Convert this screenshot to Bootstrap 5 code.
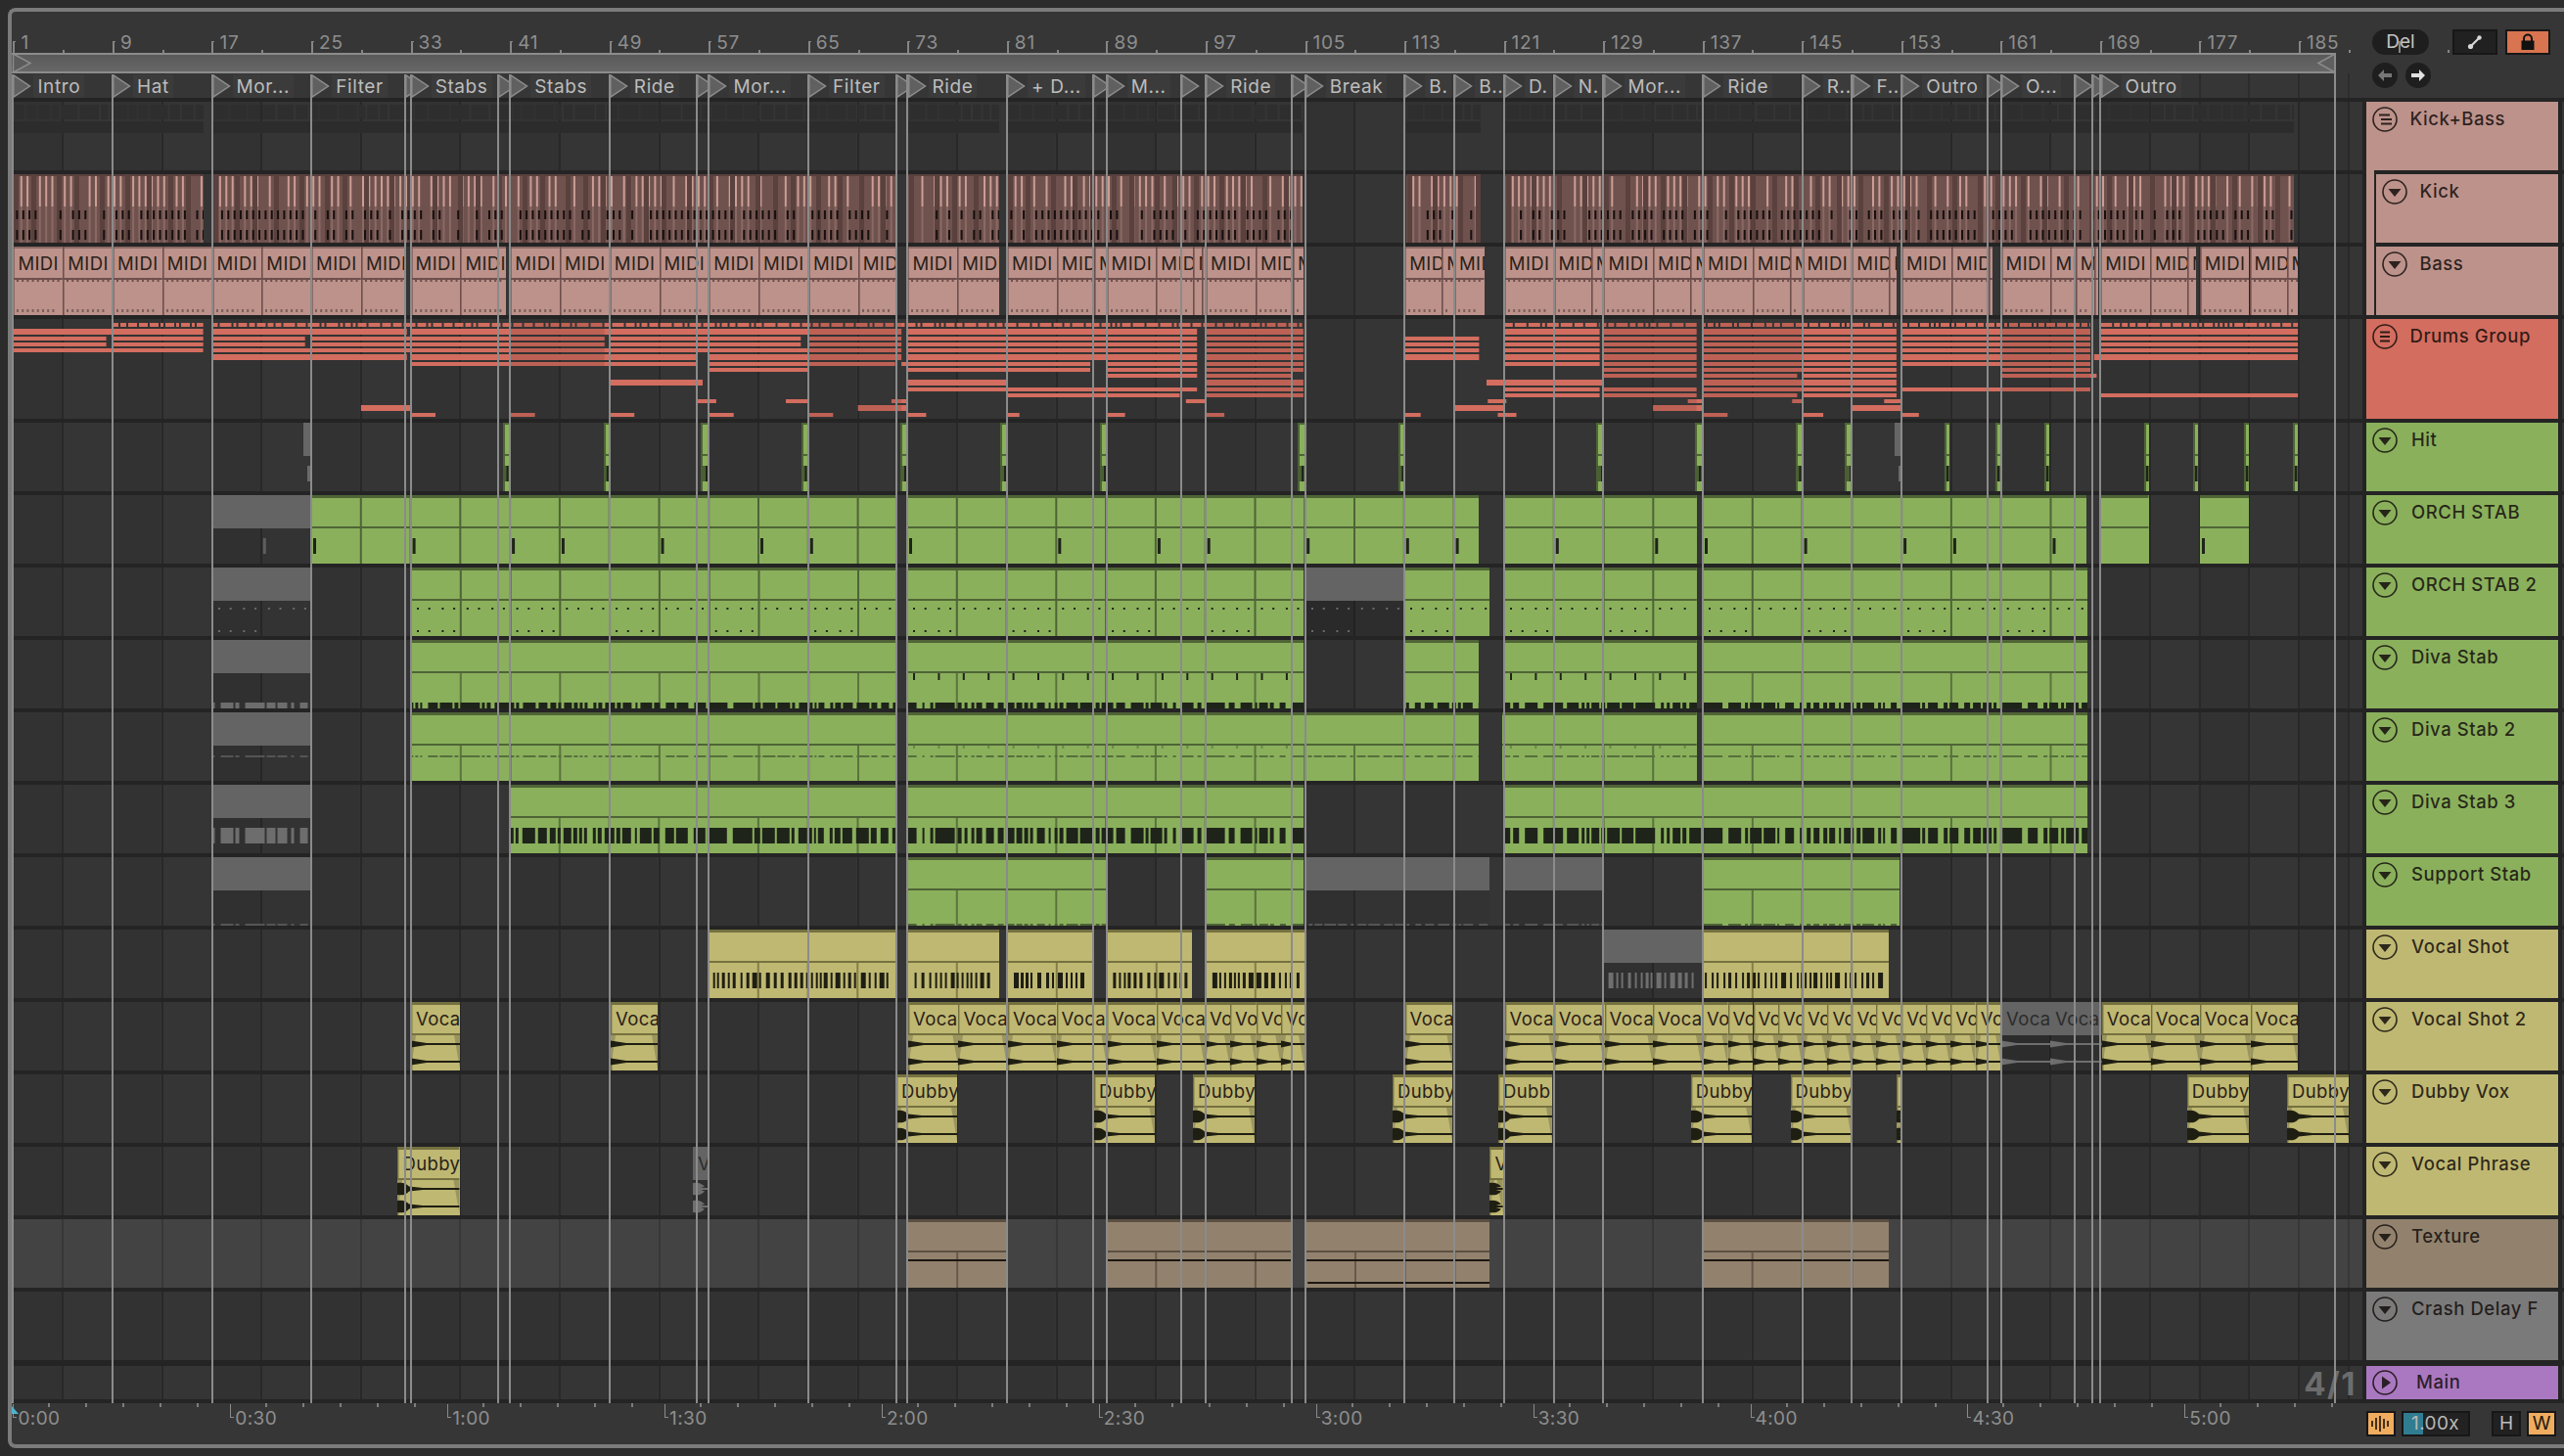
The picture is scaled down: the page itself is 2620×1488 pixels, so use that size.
<!DOCTYPE html>
<html lang="en">
<head>
<meta charset="utf-8">
<title>Arrangement</title>
<link rel="stylesheet" href="https://cdn.jsdelivr.net/npm/bootstrap@5.3.0/dist/css/bootstrap.min.css">
<style>
:root{--grid:#282828;--trk:#333333;--sep:#242424;}
html,body{margin:0;background:#2b2b2b;}
body{width:2620px;height:1488px;overflow:hidden;padding:8px 0 8px 8px;font-family:Inter,"Liberation Sans",sans-serif;}
.frame{height:1472px;border:4px solid #7b7b7b;border-right:0;border-radius:8px 0 0 8px;background:#363636;position:relative;overflow:hidden;}
.hdr{height:88px;flex:none;}
.hdr-l{width:2406px;flex:none;}
.ruler{height:42px;padding-left:1.4px;}
.rcell{width:101.56px;flex:none;position:relative;padding-left:8px;color:#8e8e8e;font-size:19px;letter-spacing:.8px;line-height:22px;padding-top:21px;}
.rcell::before{content:"";position:absolute;left:0;top:30px;width:3px;height:12px;border-left:2px solid #858585;border-top:1px solid #858585;}
.rcell::after{content:"";position:absolute;left:50.8px;top:39px;width:2px;height:3px;background:#858585;}
.loopbar{height:21px;width:2375.4px;margin-left:0;border-top:2px solid #8c8c8c;border-bottom:2px solid #8c8c8c;background:linear-gradient(#5a5a5a,#676767);position:relative;flex:none;}
.loop-tri{position:absolute;top:-2px;display:block;}
.locrow{height:25px;padding-top:1px;padding-left:1.4px;background-image:repeating-linear-gradient(90deg,transparent 0 .4px,#2c2c2c .4px 2.4px,transparent 2.4px 50.78px);}
.locitem{flex:none;display:flex;align-items:center;height:24px;min-width:0;}
.loctri{flex:none;margin-right:2px;}
.loctxt{background:#3b3b3b;color:#bdbdbd;font-size:19px;letter-spacing:.6px;line-height:26px;height:24px;padding:0 4px;white-space:nowrap;margin-left:0;}
.ctl-col{padding:18px 0 0 6px;}
.pillbtn{width:58px;height:26px;border-radius:13px;background:#1e1e1e;color:#c4c4c4;font-size:19px;line-height:26px;text-align:center;}
.sqbtn{width:46px;height:26px;background:#212121;border:2px solid #171717;display:flex;align-items:center;justify-content:center;}
.sqbtn.hot{background:#d8744f;}
.round{width:26px;height:26px;border-radius:50%;background:#1e1e1e;display:flex;align-items:center;justify-content:center;}
.stack{height:1334px;flex:none;background:var(--sep);padding:4px 0;gap:4px;position:relative;}
.trk{height:70px;flex:none;gap:4px;}
.trk.tall{height:102px;}
.trk.mini{height:34px;margin-top:2px;}
.lane{width:2402px;flex:none;position:relative;overflow:hidden;background-color:var(--trk);
 background-image:repeating-linear-gradient(90deg,transparent 0 .4px,var(--grid) .4px 2.4px,transparent 2.4px 50.78px),repeating-linear-gradient(90deg,#323232 0 50.78px,#353535 50.78px 101.56px);}
.lane.lite{background-color:#434343;background-image:repeating-linear-gradient(90deg,transparent 0 .4px,#373737 .4px 2.4px,transparent 2.4px 50.78px);}
.thead{width:196px;flex:none;display:flex;align-items:flex-start;padding:5px 0 0 6px;position:relative;color:rgba(20,14,12,.85);font-size:18.5px;font-weight:500;line-height:24px;letter-spacing:.55px;}
.thead .tname{margin-left:12.5px;white-space:nowrap;}
.thead .tname.w2{margin-left:14px;}
.thead .tname.w3{margin-left:19px;}
.tint-rose{background:#bc928b;}
.tint-red{background:#d36d5f;}
.tint-grn{background:#8ab05c;}
.tint-yel{background:#bfb872;}
.tint-tan{background:#92826d;}
.tint-gry{background:#7a7a7a;}
.tint-pur{background:#aa78c0;}
.thead.sub{border-left:2px solid var(--sep);margin-left:8px;width:188px;padding-left:6px;}
.thead.sub::before{content:"";position:absolute;left:-10px;top:-4px;bottom:0;width:8px;background:#bc928b;}
.tail{width:2px;flex:none;background:#363636;}
.tico{flex:none;display:block;}
.clip{position:absolute;top:0;bottom:0;overflow:hidden;}
.clip svg{position:absolute;left:0;top:0;display:block;}
.cliptxt{position:relative;z-index:1;padding:5px 0 0 5px;font-size:18.5px;line-height:24px;white-space:nowrap;letter-spacing:.4px;color:#2a2118;}
.dimclip .cliptxt{color:#2c2c2c;}
.overlaysvg{position:absolute;left:0;top:0;display:block;}
.sigtxt{position:absolute;right:6px;top:5px;font-size:33px;line-height:26px;font-weight:700;letter-spacing:1.5px;color:#6c6c6c;}
.cyanbar{position:absolute;left:0;top:0;bottom:0;width:2px;background:#4fb4cc;}
.locline{position:absolute;top:64px;height:1358px;width:2px;background:#8b8b8b;z-index:5;pointer-events:none;}
.locline.loopend{top:42px;height:1380px;}
.ftr{height:42px;flex:none;}
.ftr-l{width:2406px;flex:none;padding-left:1.4px;position:relative;overflow:hidden;}
.tcell{width:221.9px;flex:none;position:relative;padding:5px 0 0 5px;color:#8e8e8e;font-size:19px;letter-spacing:.4px;line-height:22px;background-image:repeating-linear-gradient(90deg,transparent 0 36px,#7d7d7d 36px 38px,transparent 38px 37px);background-size:100% 4px;background-repeat:no-repeat;}
.tcell::before{content:"";position:absolute;left:0;top:1px;height:14px;width:4px;border-left:1px solid #8a8a8a;border-bottom:1px solid #8a8a8a;}
.playtri{position:absolute;left:0;top:3px;width:0;height:0;border-left:7px solid #4fb4cc;border-top:8px solid transparent;z-index:1;}
.ftr-r{padding:8px 0 0 0;gap:6px;}
.minibtn{width:30px;height:26px;background:#212121;border:2px solid #171717;color:#bdbdbd;font-size:19px;line-height:22px;text-align:center;display:flex;align-items:center;justify-content:center;}
.minibtn.amber{background:#f0ac5f;color:#231a0e;}
.zoombox{width:70px;height:26px;background:#222;border:2px solid #171717;color:#b8b8b8;font-size:19px;line-height:22px;position:relative;padding-left:8px;margin-right:16px;letter-spacing:.4px;}
.zoomfill{position:absolute;left:0;top:0;bottom:0;width:20px;background:#307d92;}
.zoomval{position:relative;}
</style>
</head>
<body>
<svg width="0" height="0" class="position-absolute">
  <symbol id="ic-down" viewBox="0 0 26 26"><circle cx="13" cy="13" r="12" fill="none" stroke="currentColor" stroke-width="1.6"/><path d="M6.5 10h13L13 18z" fill="currentColor"/></symbol>
  <symbol id="ic-play" viewBox="0 0 26 26"><circle cx="13" cy="13" r="12" fill="none" stroke="currentColor" stroke-width="1.6"/><path d="M10 6.5v13L19 13z" fill="currentColor"/></symbol>
  <symbol id="ic-grp" viewBox="0 0 26 26"><circle cx="13" cy="13" r="12" fill="none" stroke="currentColor" stroke-width="1.6"/><path d="M7 8.5h11M9 13h11M9 17.5h11" stroke="currentColor" stroke-width="1.8" fill="none"/></symbol>
  <symbol id="ic-lines" viewBox="0 0 26 26"><circle cx="13" cy="13" r="12" fill="none" stroke="currentColor" stroke-width="1.6"/><path d="M8 8.5h10M8 13h10M8 17.5h10" stroke="currentColor" stroke-width="1.8" fill="none"/></symbol>
</svg>
<div class="frame d-flex flex-column" id="frame">
  <div class="hdr d-flex">
    <div class="hdr-l d-flex flex-column">
      <div class="ruler d-flex" id="ruler"></div>
      <div class="loopbar">
        <svg class="loop-tri" style="left:1px" width="20" height="21"><path d="M0.5 1 V20 L18 10.5 Z" fill="#5c5c5c" stroke="#8c8c8c" stroke-width="1.5"/></svg>
        <svg class="loop-tri" style="right:0" width="20" height="21"><path d="M19 1 V20 L2 10.5 Z" fill="#5f5f5f" stroke="#8c8c8c" stroke-width="1.5"/></svg>
      </div>
      <div class="locrow d-flex" id="locs"></div>
    </div>
    <div class="ctl-col flex-grow-1 d-flex flex-column gap-2">
      <div class="d-flex align-items-center">
        <div class="pillbtn">Del</div>
        <div class="sqbtn ms-4"><svg width="18" height="18" viewBox="0 0 18 18"><path d="M5 13L13 5" stroke="#d8d8d8" stroke-width="2.2"/><circle cx="4.5" cy="13.5" r="2.6" fill="#d8d8d8"/><circle cx="13.5" cy="4.5" r="2.2" fill="#d8d8d8"/></svg></div>
        <div class="sqbtn hot ms-2"><svg width="16" height="18" viewBox="0 0 16 18"><path d="M4 8V5.5a4 4 0 0 1 8 0V8" fill="none" stroke="#111" stroke-width="2"/><rect x="1.5" y="7.5" width="13" height="9.5" fill="#111"/></svg></div>
      </div>
      <div class="d-flex gap-1 ctl-nav">
        <div class="round"><svg width="16" height="16" viewBox="0 0 16 16"><path d="M1 8l6-6v4h8v4H7v4z" fill="#777"/></svg></div>
        <div class="round ms-1"><svg width="16" height="16" viewBox="0 0 16 16"><path d="M15 8L9 2v4H1v4h8v4z" fill="#e0e0e0"/></svg></div>
      </div>
    </div>
  </div>
  <div class="stack d-flex flex-column">
    <div class="trk d-flex"><div class="lane" id="L0"></div><div class="thead tint-rose"><svg class="tico" width="26" height="26"><use href="#ic-grp"/></svg><span class="tname">Kick+Bass</span></div><div class="tail"></div></div>
    <div class="trk d-flex"><div class="lane" id="L1"></div><div class="thead sub tint-rose"><svg class="tico" width="26" height="26"><use href="#ic-down"/></svg><span class="tname">Kick</span></div><div class="tail"></div></div>
    <div class="trk d-flex"><div class="lane" id="L2"></div><div class="thead sub tint-rose"><svg class="tico" width="26" height="26"><use href="#ic-down"/></svg><span class="tname">Bass</span></div><div class="tail"></div></div>
    <div class="trk tall d-flex"><div class="lane" id="L3"></div><div class="thead tint-red"><svg class="tico" width="26" height="26"><use href="#ic-lines"/></svg><span class="tname">Drums Group</span></div><div class="tail"></div></div>
    <div class="trk d-flex"><div class="lane" id="L4"></div><div class="thead tint-grn"><svg class="tico" width="26" height="26"><use href="#ic-down"/></svg><span class="tname w2">Hit</span></div><div class="tail"></div></div>
    <div class="trk d-flex"><div class="lane" id="L5"></div><div class="thead tint-grn"><svg class="tico" width="26" height="26"><use href="#ic-down"/></svg><span class="tname w2">ORCH STAB</span></div><div class="tail"></div></div>
    <div class="trk d-flex"><div class="lane" id="L6"></div><div class="thead tint-grn"><svg class="tico" width="26" height="26"><use href="#ic-down"/></svg><span class="tname w2">ORCH STAB 2</span></div><div class="tail"></div></div>
    <div class="trk d-flex"><div class="lane" id="L7"></div><div class="thead tint-grn"><svg class="tico" width="26" height="26"><use href="#ic-down"/></svg><span class="tname w2">Diva Stab</span></div><div class="tail"></div></div>
    <div class="trk d-flex"><div class="lane" id="L8"></div><div class="thead tint-grn"><svg class="tico" width="26" height="26"><use href="#ic-down"/></svg><span class="tname w2">Diva Stab 2</span></div><div class="tail"></div></div>
    <div class="trk d-flex"><div class="lane" id="L9"></div><div class="thead tint-grn"><svg class="tico" width="26" height="26"><use href="#ic-down"/></svg><span class="tname w2">Diva Stab 3</span></div><div class="tail"></div></div>
    <div class="trk d-flex"><div class="lane" id="L10"></div><div class="thead tint-grn"><svg class="tico" width="26" height="26"><use href="#ic-down"/></svg><span class="tname w2">Support Stab</span></div><div class="tail"></div></div>
    <div class="trk d-flex"><div class="lane" id="L11"></div><div class="thead tint-yel"><svg class="tico" width="26" height="26"><use href="#ic-down"/></svg><span class="tname w2">Vocal Shot</span></div><div class="tail"></div></div>
    <div class="trk d-flex"><div class="lane" id="L12"></div><div class="thead tint-yel"><svg class="tico" width="26" height="26"><use href="#ic-down"/></svg><span class="tname w2">Vocal Shot 2</span></div><div class="tail"></div></div>
    <div class="trk d-flex"><div class="lane" id="L13"></div><div class="thead tint-yel"><svg class="tico" width="26" height="26"><use href="#ic-down"/></svg><span class="tname w2">Dubby Vox</span></div><div class="tail"></div></div>
    <div class="trk d-flex"><div class="lane" id="L14"></div><div class="thead tint-yel"><svg class="tico" width="26" height="26"><use href="#ic-down"/></svg><span class="tname w2">Vocal Phrase</span></div><div class="tail"></div></div>
    <div class="trk d-flex"><div class="lane lite" id="L15"><div class="cyanbar"></div></div><div class="thead tint-tan"><svg class="tico" width="26" height="26"><use href="#ic-down"/></svg><span class="tname w2">Texture</span></div><div class="tail"></div></div>
    <div class="trk d-flex"><div class="lane" id="L16"></div><div class="thead tint-gry"><svg class="tico" width="26" height="26"><use href="#ic-down"/></svg><span class="tname w2">Crash Delay F</span></div><div class="tail"></div></div>
    <div class="trk mini d-flex"><div class="lane" id="L17"><div class="sigtxt">4/1</div></div><div class="thead tint-pur pt-1"><svg class="tico" width="26" height="26"><use href="#ic-play"/></svg><span class="tname w3">Main</span></div><div class="tail"></div></div>
  </div>
  <div class="ftr d-flex">
    <div class="ftr-l d-flex" id="times"><div class="playtri"></div></div>
    <div class="ftr-r d-flex">
      <div class="minibtn amber"><svg width="22" height="18" viewBox="0 0 22 18"><path d="M2 6v6M6 3v12M10 1v16M14 4v10M18 6v6" stroke="#1c1408" stroke-width="1.6"/></svg></div>
      <div class="zoombox"><div class="zoomfill"></div><span class="zoomval">1.00x</span></div>
      <div class="minibtn">H</div>
      <div class="minibtn amber">W</div>
    </div>
  </div>
</div>
<script src="https://cdn.jsdelivr.net/npm/bootstrap@5.3.0/dist/js/bootstrap.bundle.min.js"></script>
<script>
(function(){
const BAR=12.695, X=b=>1.4+(b-1)*BAR, PX=x=>x-12, f=n=>Math.round(n*10)/10;
const R=(x,y,w,h)=>`M${f(x)} ${f(y)}h${f(w)}v${f(h)}h${f(-w)}z`;
function rng(s){return ()=>{s=(s*1664525+1013904223)%4294967296;return s/4294967296;};}
const el=id=>document.getElementById(id);
function add(lane,x0,x1,cls,svg,txt,h){
  const d=document.createElement('div');d.className='clip '+(cls||'');
  d.style.left=f(x0)+'px';d.style.width=f(x1-x0)+'px';
  d.innerHTML=(txt?`<div class="cliptxt">${txt}</div>`:'')+(svg?`<svg width="${f(x1-x0)}" height="${h||70}">${svg}</svg>`:'');
  el(lane).appendChild(d);return d;
}
const P=(d,c,o)=>d?`<path d="${d}" fill="${c}"${o?` opacity="${o}"`:''}/>`:'';

/* top ruler */
let h='';for(let b=1;b<=185;b+=8)h+=`<div class="rcell">${b}</div>`;el('ruler').innerHTML=h+'<div class="rcell" style="width:20px">&nbsp;</div>';
/* locators */
const locs=[[1,'Intro'],[9,'Hat'],[17,'Mor...'],[25,'Filter'],[32.55],[33,'Stabs'],[40.05],[41,'Stabs'],[49,'Ride'],[56],[57,'Mor...'],[65,'Filter'],[72.1],[73,'Ride'],[81,'+ D...'],[87.9],[89,'M...'],[95.05],[97,'Ride'],[103.95],[105,'Break'],[113,'B.'],[117,'B..'],[121,'D.'],[125,'N.'],[129,'Mor...'],[137,'Ride'],[145,'R..'],[149,'F..'],[153,'Outro'],[159.9],[161,'O...'],[166.9],[168.35],[169,'Outro'],[187.9]];
h='';const frame=el('frame');
locs.forEach((l,i)=>{
  const x=X(l[0]);
  if(i<locs.length-1){
    const w=X(locs[i+1][0])-x;
    h+=`<div class="locitem" style="width:${f(w)}px"><svg class="loctri" width="19" height="24"><path d="M.8 .8V23.2L17.5 12Z" fill="#606060" stroke="#8c8c8c" stroke-width="1.5"/></svg>${l[1]?`<span class="loctxt">${l[1]}</span>`:''}</div>`;
  }
  const ln=document.createElement('div');ln.className='locline'+(i==locs.length-1?' loopend':'');ln.style.left=f(x-1)+'px';frame.appendChild(ln);
});
el('locs').innerHTML=h;
/* time ruler */
h='';['0:00','0:30','1:00','1:30','2:00','2:30','3:00','3:30','4:00','4:30','5:00'].forEach(t=>h+=`<div class="tcell">${t}</div>`);
el('times').insertAdjacentHTML('beforeend',h);

/* L0: folded group preview + L1 kick */
const kickSegs=[[13,208],[217,915],[928,1021],[1029,1331],[1437,1513],[1538,2344]].map(s=>[PX(s[0]),PX(s[1])]);
{let r=rng(11),a='',b='';
 kickSegs.forEach(s=>{let x=s[0]+2;while(x<s[1]-2){const w=6+r()*16;a+=R(x,3,Math.min(w,s[1]-x),15);x+=w+2;}b+=R(s[0],20,s[1]-s[0],12);});
 const sv=document.createElementNS('http://www.w3.org/2000/svg','svg');
 sv.setAttribute('class','overlaysvg');sv.setAttribute('width','2402');sv.setAttribute('height','70');sv.innerHTML=P(a,'#2e2e2e')+P(b,'#2c2c2c');el('L0').appendChild(sv);}
{let r=rng(5);
 kickSegs.forEach(s=>{
  const w=s[1]-s[0];let band='',pale='',low='',ink='';
  let x=1;while(x<w){const g=18+Math.floor(r()*3)*4;band+=R(x,0,5,70);x+=g;}
  for(let k=Math.ceil((s[0]-1.4)/6.35);1.4+k*6.35<s[1]-2;k++){
    const px=1.4+k*6.35-s[0];if(r()<.74){pale+=R(px+1,2,2,31);low+=R(px+1,33,2,37);}
    if(r()<.7){ink+=R(px+3,37,2,9)+R(px+3,57,2,10);}
  }
  add('L1',s[0],s[1],'',P(R(0,0,w,2),'#59403d')+P(pale,'#cb9d95')+P(low,'#8a6964')+P(band,'#5a413e')+P(ink,'#170f0e'));
  el('L1').lastChild.style.background='#6f524e';
 });}
/* L2 bass cells */
const bassSegs=[
 [1,[1,5,9,13,17,21,25,29],32.6],[33,[33,37],40.7],[41,[41,45,49,53,57,61,65,69],72],[73,[73,77],80.4],
 [81,[81,85,88,89,93,96,96.7,97,101,104],104.85],[113,[113,116,117],119.4],
 [121,[121,125,128,129,133,136,137,141,144,145,149,152],152.6],[153,[153,157,160],160.3],
 [161,[161,165,167,168.5],168.8],[169,[169,173,176],176.7],[177,[177,181,184],184.9]];
bassSegs.forEach(sg=>{
  const cells=sg[1],end=sg[2];
  cells.forEach((c,i)=>{
    const a=X(c),b=i<cells.length-1?X(cells[i+1]):X(end),w=b-a;
    let dots='',d2='';for(let x=4;x<w-2;x+=5.2){dots+=R(x,34,2,2);if(x<w-6)d2+=R(x,64,2,3);}
    const sv=P(R(0,0,w,2),'#8c6b66')+P(R(0,0,1.6,70),'#6e4f4c')+P(R(0,32,w,2),'#6e4f4c')+P(dots,'#6e4f4c')+P(d2,'#7d5e5a');
    add('L2',a,b,'tint-rose',sv,w<16?'M':w<30?'MI':'MIDI');
  });
});
/* L3 drums */
{
 const main=[[1,8.5],[9,16.3],[17,24.5],[25,40.9],[41,48.6],[49,64.4],[65,72.5],[73,96.3],[97,104.85],[113,119],[121,128.7],[129,136.5],[137,152.6],[153,168.2],[169,184.9]];
 const rows=[
  [336,6,[[1,16.3],[17,32.7],[33,41],[41,72.5],[73,96.3],[97,104.85],[121,128.7],[129,136.5],[137,152.6],[153,168.2],[169,184.9]]],
  [344,4,main],[350,4,main],
  [356,4,[[1,16.3],[17,33.4],[33.3,41],[41,72.5],[73,96.3],[97,104.85],[113,119],[121,128.7],[129,136.5],[137,152.6],[153,168.2],[169,184.9]]],
  [362,6,[[17,32.7],[33,41],[41,56],[57,72.5],[73,96.3],[97,104.85],[113,119],[121,128.7],[129,136.5],[137,152.6],[153,168.2],[168.5,184.9]]],
  [370,4,[[33,41],[41,56],[57,72],[72.5,87.7],[89,96.3],[97,104.85],[121,128.7],[129,136.5],[137,152.6],[153,168.2]]],
  [376,4,[[57,65],[73,87.7],[89,96.3],[97,104.85],[129,136.5],[137,152.6],[161,168.2]]],
  [382,4,[[89,96.3],[97,104],[129,136.5],[137,144.6],[145,152.6],[161,168.7]]],
  [388,6,[[49,56.5],[73,81],[97,104.85],[119.6,129],[137,152.6]]],
  [396,4,[[73,96.3],[97,104.85],[121,128.7],[129,136.5],[137,152.6],[153,168.2]]],
  [402,4,[[81,94.9],[97,104.85],[121,128.7],[129,136.5],[137,144.6],[145,152.6],[169,184.9]]],
  [408,4,[[56,57.6],[63.2,65],[71.7,73],[95.4,97],[119.7,121.2],[135.8,137],[144.2,145],[151.6,153]]],
  [414,6,[[29,33],[69,73],[117,121],[133,137],[149,153]]],
  [422,4,[[33,35],[41,43],[49,51],[57,59],[65,67],[73,74.5],[81,82],[89,90.5],[97,98.5],[113,114.3],[120.5,122],[137,139],[145,146.7],[153,154.4]]]];
 let d='',r=rng(77);
 [[9,16.3],[17,104.85],[121,128.7],[129,136.5],[137,152.6],[153,168.2],[169,184.9]].forEach(s=>{
   let x=X(s[0]);const e=X(s[1]);while(x<e){const w=Math.min(3+Math.floor(r()*4)*3,e-x);d+=R(x,4,w,4);x+=w+2;}
 });
 rows.forEach(ro=>ro[2].forEach(s=>d+=R(X(s[0]),ro[0]-326,X(s[1])-X(s[0]),ro[1])));
 let shade='';[[41,48.6],[65,72.5],[129,136.5],[137,145],[161,168.2],[97,104.85]].forEach(s=>shade+=R(X(s[0]),0,X(s[1])-X(s[0]),102));
 const sv=document.createElementNS('http://www.w3.org/2000/svg','svg');
 sv.setAttribute('class','overlaysvg');sv.setAttribute('width','2402');sv.setAttribute('height','102');
 sv.innerHTML=`<defs><clipPath id="dr"><path d="${d}"/></clipPath></defs>`+P(d,'#d36d5f')+`<g clip-path="url(#dr)">${P(shade,'#000','.1')}</g>`;
 el('L3').appendChild(sv);
}
/* L4 hit */
[[310,317,1],[514,520.5],[617,622.8],[716,724],[818.6,825],[920,927],[1022,1029],[1124,1131],[1326,1333],[1428.6,1435],[1631,1639],[1732,1739],[1834.6,1841],[1885,1893],[1936,1943,1],[1987,1992],[2039,2044],[2089,2094],[2191,2196],[2241,2246],[2293,2298],[2343,2348]].forEach(c=>{
  const a=PX(c[0]),b=PX(c[1]),w=b-a;
  if(c[2]){add('L4',a,b,'','<rect width="'+w+'" height="34" fill="#666"/><rect x="'+(w-3)+'" y="44" width="3" height="16" fill="#6a6a6a"/>');return;}
  add('L4',a,b,'tint-grn',P(R(0,0,2,70),'#4f6436')+P(R(0,0,w,2),'#4f6436')+P(R(0,32,w,2),'#4f6436')+P(R(0,44,w,16),'#4a5f34')+P(R(w-3,44,2,16),'#1e2419'));
});
/* generic stabs */
const DARK={grn:'#4f6436',yel:'#75713f',tan:'#5c4f42'};
function stab(id,a,b,t,o){
  o=o||{};const w=b-a,dim=o.dim;let s='';
  if(dim){s+=P(R(0,0,w,34),'#646464');}
  else{
    s+=P(R(0,0,w,3),DARK[t]);s+=P(R(0,32,w,2),DARK[t]);
    let d='';for(let k=0;1.4+k*50.78<b;k++){const g=1.4+k*50.78;if(g>a+2&&g<b-1)d+=R(g-a-1,o.cellTitle?0:32,2,o.cellTitle?70:38);}
    s+=P(d,DARK[t],o.cellTitle?null:'.8');
  }
  if(o.marks)s+=o.marks(a,b,dim);
  const c=add(id,a,b,dim?'dimclip':'tint-'+t,s,o.txt);
  if(dim)c.style.background=o.deep?'rgba(0,0,0,.14)':'rgba(0,0,0,.03)';
  return c;
}
function barcode(seed,ws,gs,lim0,lim1){const r=rng(seed),o=[];let x=lim0||0;while(x<(lim1||2402)){const w=ws[Math.floor(r()*ws.length)];o.push([x,w]);x+=w+gs[Math.floor(r()*gs.length)];}return o;}
const BC=barcode(9,[3,2,6,8,12,20,4,9,13,3,10],[2,2,3,4,6]);
function bars(list,y,hh,c,cdim){return (a,b,dim)=>{let d='';list.forEach(p=>{if(p[0]+p[1]>a&&p[0]<b)d+=R(p[0]-a,y,p[1],hh);});return P(d,dim?cdim:c);};}
/* L5 ORCH STAB */
const orchTicks=[25,33,41,45,53,61,65,73,85,93,97,105,113,117,125,133,137,145,153,157,165,177].map(b=>[X(b)+2,3]);
const orchM=bars(orchTicks,44,16,'#1e2419','#6d6d6d');
stab('L5',X(17),X(25),'grn',{dim:1,marks:(a,b)=>P(R(X(21)+1-a,44,3,16),'#5e5e5e')});
[[25,72.05],[73,119],[121,136.5],[137,167.9],[169,172.9],[177,181]].forEach(s=>stab('L5',X(s[0]),X(s[1]),'grn',{cellTitle:1,marks:orchM}));
/* L6 ORCH 2 */
const dots=(a,b,dim)=>{let d='';for(let bb=1;bb<190;bb+=1){const k=bb;const x=X(bb)+5+(k%2?1:0);if(x>a&&x<b-2){d+=R(x-a,41,2,2);const m=((bb-1)%8);if(m<4)d+=R(x-a,64,2,2);}}return P(d,dim?'#6a6a6a':'#1e2419');};
stab('L6',X(17),X(25),'grn',{dim:1,marks:dots});
[[33,72.05],[73,104.9],[113,119.85],[121,136.5],[137,168]].forEach(s=>stab('L6',X(s[0]),X(s[1]),'grn',{cellTitle:1,marks:dots}));
stab('L6',X(105),X(113),'grn',{dim:1,deep:1,marks:dots});
/* L7 Diva */
const stripM=bars(BC,64,6,'#1e2419','#6d6d6d');
const tk=(y,hh,c)=>(a,b)=>{let d='';for(let bb=1;bb<190;bb+=2){const x=X(bb)+6;if(x>a&&x<b&&((bb>=73&&bb<105)||(bb>=121&&bb<137)))d+=R(x-a,y,2,hh);}return P(d,c);};
stab('L7',X(17),X(25),'grn',{dim:1,marks:stripM});
[[33,72.05],[73,104.9],[113,119],[121,136.5],[137,168]].forEach(s=>stab('L7',X(s[0]),X(s[1]),'grn',{marks:(a,b,d)=>stripM(a,b,d)+tk(34,7,'#1e2419')(a,b)}));
/* L8 Diva 2 */
const thinM=bars(BC,44,2,'#55703c','#555');
stab('L8',X(17),X(25),'grn',{dim:1,marks:thinM});
[[33,72.05],[73,119],[120.85,136.5],[137,168]].forEach(s=>stab('L8',X(s[0]),X(s[1]),'grn',{marks:(a,b,d)=>thinM(a,b,d)+tk(34,3,'#6a8a48')(a,b)}));
/* L9 Diva 3 */
const bigM=bars(BC,44,16,'#1e2419','#6d6d6d');
stab('L9',X(17),X(25),'grn',{dim:1,marks:bigM});
[[41,72.05],[73,104.9],[121,168]].forEach(s=>stab('L9',X(s[0]),X(s[1]),'grn',{marks:bigM}));
/* L10 Support */
const supM=bars(BC,68,2,'#4f6436','#555');
stab('L10',X(17),X(25),'grn',{dim:1,marks:supM});
[[73,89],[97,104.9],[137,152.85]].forEach(s=>stab('L10',X(s[0]),X(s[1]),'grn',{marks:supM}));
[[105,119.85],[121,129]].forEach(s=>stab('L10',X(s[0]),X(s[1]),'grn',{dim:1,marks:supM}));
/* L11 Vocal shot */
const BV=barcode(21,[2,2,3,2,5,3,2,4],[3,3,4,5,3,2]);
const vsM=(a,b,dim)=>bars(BV.filter(p=>p[0]>a+2&&p[0]+p[1]<b-3),44,16,'#1f1e12','#6f6f6f')(a,b,dim);
[[57,72.05],[73,80.4],[81,87.9],[89,95.9],[97,105],[137,152]].forEach(s=>stab('L11',X(s[0]),X(s[1]),'yel',{marks:vsM}));
stab('L11',X(129),X(137),'yel',{dim:1,marks:vsM});
/* audio wave */
function wave(w,thick,yy,c){const len=Math.min(thick?26:16,w*.5),t=thick?6:3.5;let s='';yy.forEach(y=>{s+=`<path d="M0 ${y-t}${thick?` C5 ${y-t-1} 9 ${y-t} 12 ${y-2.5}`:''} L${f(len)} ${y-1} H${f(w)} V${y+1} H${f(len)} ${thick?`L12 ${y+2.5} C9 ${y+t} 5 ${y+t+1} 0 ${y+t}`:`L0 ${y+t}`}Z" fill="${c}"/>`;});return s;}
function audio(id,a,b,t,txt,o){
  o=o||{};const w=b-a,dim=o.dim;
  const wedge=dim?'':`<path d="M0 34H5L0 68ZM${f(w)} 34H${f(w-6)}L${f(w)} 68Z" fill="#9a9560"/>`;
  const s=(dim?P(R(0,0,w,34),'#646464'):P(R(0,0,w,3),DARK[t])+P(R(0,32,w,2),DARK[t])+P(R(0,0,1.4,70),DARK[t])+wedge)+wave(w,o.thick,[43,61],dim?'#6e6e6e':'#1f1e12');
  const c=add(id,a,b,dim?'dimclip':'tint-'+t,s,txt);if(dim)c.style.background='rgba(0,0,0,.1)';
}
/* L12 */
const v2=[420,470,null,624,672,null,928,979.4,1030,1079.5,1131,1181.6,1231,1257,1283.7,1309,1333,null,1435.5,1484,null,1537.5,1587.8,1639.6,1689,1739,1765.6,1791.5,1817,1842,1867.4,1892.4,1917.4,1943.3,1968.3,1993.3,2018.8,2045,null,2147.7,2197.8,2247.8,2299.6,2348];
const vt=w=>w<30?'Vo':'Voca';
for(let i=0;i<v2.length-1;i++){if(v2[i]==null||v2[i+1]==null)continue;audio('L12',PX(v2[i]),PX(v2[i+1]),'yel',vt(v2[i+1]-v2[i]));}
audio('L12',PX(2045),PX(2095),'yel','Voca',{dim:1});audio('L12',PX(2095),PX(2147.7),'yel','Voca',{dim:1});
/* L13 */
[[916,978],[1118,1180.4],[1219,1282],[1423,1484],[1531,1586],[1727.7,1790],[1829.5,1892],[1937.5,1941.5],[2234.8,2298],[2337,2400]].forEach(s=>audio('L13',PX(s[0]),PX(s[1]),'yel',(s[1]-s[0])<10?'':(s[1]-s[0])<58?'Dubb':'Dubby',{thick:1}));
/* L14 */
audio('L14',PX(406.4),PX(469.8),'yel','Dubby',{thick:1});
audio('L14',PX(708),PX(724.6),'yel','V',{thick:1,dim:1});
audio('L14',PX(1522.4),PX(1536),'yel','V',{thick:1});
/* L15 texture */
[[928,1028],[1132,1320.4],[1333.5,1522],[1739,1930]].forEach(s=>{
  stab('L15',PX(s[0]),PX(s[1]),'tan',{marks:(a,b)=>{
    let e=P(R(0,41,b-a,2),'#1c1712');
    if(s[0]==1333.5)e+=P(R(X(105)+2-a,64,b-X(105)-2,2),'#1c1712');return e;}});
});
})();
</script>
</body>
</html>
